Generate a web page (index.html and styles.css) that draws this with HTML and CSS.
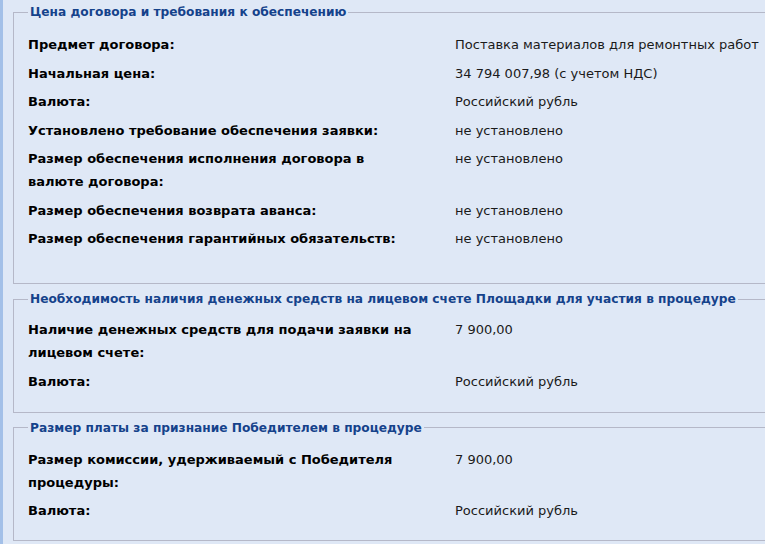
FILE: index.html
```html
<!DOCTYPE html>
<html lang="ru">
<head>
<meta charset="utf-8">
<title>Цена договора</title>
<link rel="stylesheet" href="styles.css">
</head>
<body>
<div class="page">
  <fieldset class="fs fs-tall">
    <legend>Цена договора и требования к обеспечению</legend>
    <div class="rows">
      <div class="lbl">Предмет договора:</div><div class="val">Поставка материалов для ремонтных работ</div>
      <div class="lbl">Начальная цена:</div><div class="val">34 794 007,98 (с учетом НДС)</div>
      <div class="lbl">Валюта:</div><div class="val">Российский рубль</div>
      <div class="lbl">Установлено требование обеспечения заявки:</div><div class="val">не установлено</div>
      <div class="lbl">Размер обеспечения исполнения договора в валюте договора:</div><div class="val">не установлено</div>
      <div class="lbl">Размер обеспечения возврата аванса:</div><div class="val">не установлено</div>
      <div class="lbl">Размер обеспечения гарантийных обязательств:</div><div class="val">не установлено</div>
    </div>
  </fieldset>
  <fieldset class="fs fs-mid">
    <legend>Необходимость наличия денежных средств на лицевом счете Площадки для участия в процедуре</legend>
    <div class="rows">
      <div class="lbl">Наличие денежных средств для подачи заявки на лицевом счете:</div><div class="val">7 900,00</div>
      <div class="lbl">Валюта:</div><div class="val">Российский рубль</div>
    </div>
  </fieldset>
  <fieldset class="fs fs-last">
    <legend>Размер платы за признание Победителем в процедуре</legend>
    <div class="rows">
      <div class="lbl">Размер комиссии, удерживаемый с Победителя процедуры:</div><div class="val">7 900,00</div>
      <div class="lbl">Валюта:</div><div class="val">Российский рубль</div>
    </div>
  </fieldset>
</div>
</body>
</html>
```
FILE: styles.css
```css
html, body {
  margin: 0;
  padding: 0;
  background: #dfe8f6;
}
body {
  font-family: "DejaVu Sans", Verdana, sans-serif;
  font-size: 13px;
  color: #1a1a1a;
  overflow: hidden;
}
.page {
  border-left: 3px solid #a3c0e8;
  padding: 4px 0 0 10px;
  min-height: 100vh;
  box-sizing: border-box;
  overflow: hidden;
}
.fs {
  margin: 0 -40px 7px 0;
  padding: 12px 0 18px 14px;
  border: 1px solid #b5b8c8;
  min-width: 0;
}
.fs-tall {
  padding-top: 13px;
  padding-bottom: 33px;
}
.fs-mid {
  padding-top: 11px;
  padding-bottom: 19px;
}
.fs-last {
  padding-top: 12px;
}
.fs legend {
  padding: 0 2px;
  color: #15428b;
  font-size: 12.2px;
  font-weight: bold;
  line-height: 16px;
  white-space: nowrap;
}
.rows {
  display: grid;
  grid-template-columns: 427px auto;
  row-gap: 5.5px;
  line-height: 23px;
}
.lbl {
  font-weight: bold;
  color: #000;
  padding-right: 38px;
}
.val {
  white-space: nowrap;
}
```
